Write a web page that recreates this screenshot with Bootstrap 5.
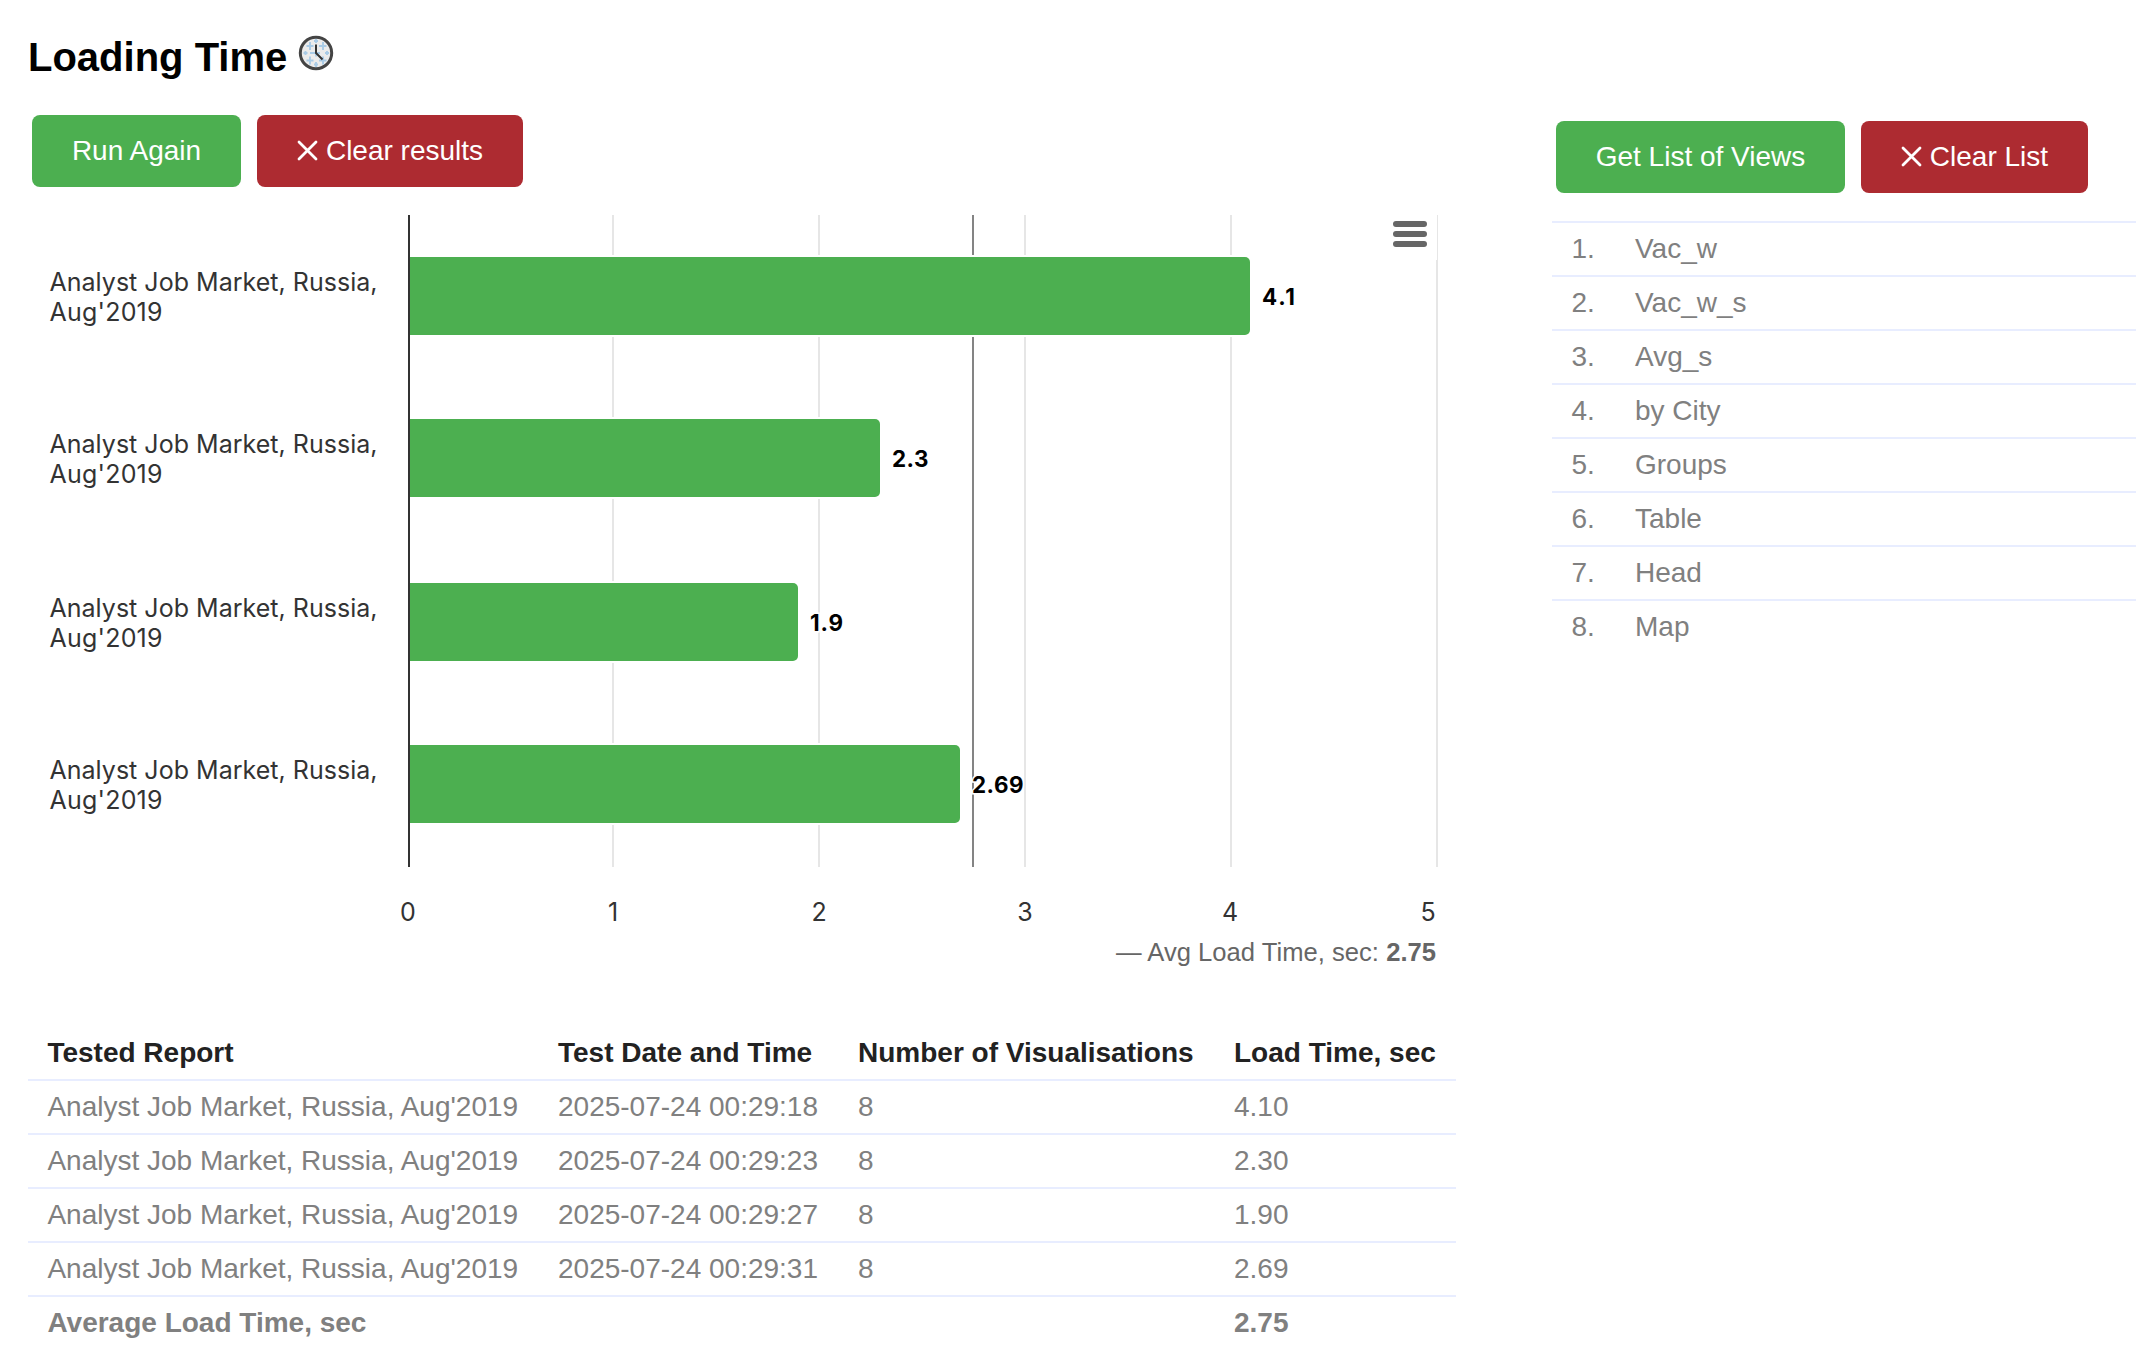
<!DOCTYPE html>
<html lang="en">
<head>
<meta charset="utf-8">
<title>Loading Time</title>
<link href="https://cdn.jsdelivr.net/npm/bootstrap@5.3.0/dist/css/bootstrap.min.css" rel="stylesheet">
<style>
  body { font-family: "Liberation Sans", Arial, sans-serif; font-size: 28px; line-height: 32px; color: #808080; background: #fff; overflow: hidden; }
  .page-title { font-size: 40px; line-height: 46px; font-weight: 700; color: #000; margin: 34px 0 35px; }
  .clock-icon { width: 36px; height: 36px; margin: 1px 0 0 11px; }
  .report-pane { width: 1456px; padding-left: 28px; }
  .views-pane { width: 584px; margin-left: 96px; padding-top: 121px; }
  .btn-tool { --bs-btn-color: #fff; --bs-btn-font-size: 28px; --bs-btn-line-height: 32px; --bs-btn-border-radius: 8px; --bs-btn-border-width: 0; --bs-btn-padding-x: 0; --bs-btn-padding-y: 0; height: 72px; font-family: inherit; }
  .btn-go { background: #4caf50; }
  .btn-clear { background: #ad2b31; }
  .cross-icon { width: 21px; height: 22px; margin: 0 8px 2px 0; }
  .w-run { width: 209px; } .w-results { width: 266px; } .w-get { width: 289px; } .w-list { width: 227px; }
  .line-table { --bs-table-color: #808080; --bs-table-bg: transparent; border-color: #e8edff; color: #808080; table-layout: fixed; margin: 0; }
  .line-table > :not(caption) > * > * { height: 54px; padding: 10px 0 10px 20px; border-width: 0; border-top: 2px solid #e8edff; white-space: nowrap; color: #808080; }
  .line-table > :not(caption) > * > :first-child { padding-left: 19.4px; }
  .line-table > thead > tr > th { border-top-color: transparent; color: #222; }
  .report-table { margin-top: 25px; }
  .views-table { margin-top: 28px; }
  .chart { display: block; width: 1428px; height: 800px; margin-top: 13px; font-family: Inter, sans-serif; }
  .axis-text { font-size: 25px; fill: #333; }
  .value-text { font-size: 22.4px; font-weight: 700; fill: #000; paint-order: stroke; stroke: #fff; stroke-width: 3px; }
  .avg-text { font-family: "Liberation Sans", Arial, sans-serif; font-size: 25.6px; fill: #666; }
</style>
<script src="https://cdn.jsdelivr.net/npm/bootstrap@5.3.0/dist/js/bootstrap.bundle.min.js"></script>
</head>
<body>
<div class="d-flex align-items-start">
  <main class="report-pane flex-shrink-0">
    <h1 class="page-title d-flex align-items-start">Loading Time
      <svg class="clock-icon" viewBox="0 0 36 36">
        <circle cx="18" cy="18" r="15.700" fill="#ebebeb" stroke="#444" stroke-width="3"/>
        <path d="M18 4v4M16 6h4M12 7v8M8.500 11h7M25 7v8M21 11h7.500M18 14.500v7M12 18h10M5.500 18h4M7.500 16v4M27 18h4M29 16v4M12 21.500v8M8.500 25.500h7M25 21.500v8M21 25.500h7.500M18 27v5M16 29.500h4" fill="none" stroke="#a9cbe6" stroke-width="1.9"/>
        <path d="M18 9.500V18l6.500 6.500" fill="none" stroke="#333" stroke-width="2"/>
      </svg>
    </h1>
    <div class="d-flex gap-3 ps-1">
      <button class="btn btn-tool btn-go w-run">Run Again</button>
      <button class="btn btn-tool btn-clear w-results d-flex align-items-center justify-content-center"><svg class="cross-icon" viewBox="0 0 21 22"><path d="M2 3l17 17M19 3L2 20" stroke="#fff" stroke-width="2.8" stroke-linecap="round"/></svg>Clear results</button>
    </div>
    <svg class="chart" viewBox="28 200 1428 800">
      <path d="M613 215V867M819 215V867M1025 215V867M1231 215V867M1437 215V867" stroke="#e6e6e6" stroke-width="2"/>
      <path d="M973 215V867" stroke="#777" stroke-width="1.800"/>
      <g fill="#4caf50" stroke="#fff" stroke-width="4" paint-order="stroke">
        <path d="M410 257h835a5 5 0 0 1 5 5v68a5 5 0 0 1-5 5H410z"/>
        <path d="M410 419h465a5 5 0 0 1 5 5v68a5 5 0 0 1-5 5H410z"/>
        <path d="M410 583h383a5 5 0 0 1 5 5v68a5 5 0 0 1-5 5H410z"/>
        <path d="M410 745h545a5 5 0 0 1 5 5v68a5 5 0 0 1-5 5H410z"/>
      </g>
      <path d="M409 215V867" stroke="#333" stroke-width="2"/>
      <g class="axis-text">
        <text x="49.500" y="291" textLength="328">Analyst Job Market, Russia,</text><text x="49.500" y="321" textLength="113">Aug'2019</text>
        <text x="49.500" y="453" textLength="328">Analyst Job Market, Russia,</text><text x="49.500" y="483" textLength="113">Aug'2019</text>
        <text x="49.500" y="617" textLength="328">Analyst Job Market, Russia,</text><text x="49.500" y="647" textLength="113">Aug'2019</text>
        <text x="49.500" y="779" textLength="328">Analyst Job Market, Russia,</text><text x="49.500" y="809" textLength="113">Aug'2019</text>
      </g>
      <g class="axis-text" text-anchor="middle">
        <text x="408" y="921">0</text><text x="613" y="921">1</text><text x="819" y="921">2</text><text x="1025" y="921">3</text><text x="1230" y="921">4</text><text x="1428" y="921">5</text>
      </g>
      <g class="value-text">
        <text x="1262" y="305" textLength="33">4.1</text><text x="892" y="467" textLength="36.500">2.3</text><text x="810" y="631" textLength="33">1.9</text><text x="972" y="793" textLength="51.500">2.69</text>
      </g>
      <rect x="1380" y="208" width="57" height="52" fill="#fff"/>
      <path d="M1396 224h28M1396 234h28M1396 244h28" stroke="#666" stroke-width="6" stroke-linecap="round"/>
      <text class="avg-text" x="1116" y="961" textLength="320">— Avg Load Time, sec: <tspan font-weight="700">2.75</tspan></text>
    </svg>
    <table class="table line-table report-table">
      <colgroup><col style="width:510px"><col style="width:300px"><col style="width:376px"><col></colgroup>
      <thead><tr><th>Tested Report</th><th>Test Date and Time</th><th>Number of Visualisations</th><th>Load Time, sec</th></tr></thead>
      <tbody>
        <tr><td>Analyst Job Market, Russia, Aug'2019</td><td>2025-07-24 00:29:18</td><td>8</td><td>4.10</td></tr>
        <tr><td>Analyst Job Market, Russia, Aug'2019</td><td>2025-07-24 00:29:23</td><td>8</td><td>2.30</td></tr>
        <tr><td>Analyst Job Market, Russia, Aug'2019</td><td>2025-07-24 00:29:27</td><td>8</td><td>1.90</td></tr>
        <tr><td>Analyst Job Market, Russia, Aug'2019</td><td>2025-07-24 00:29:31</td><td>8</td><td>2.69</td></tr>
        <tr class="fw-bold"><td>Average Load Time, sec</td><td></td><td></td><td>2.75</td></tr>
      </tbody>
    </table>
  </main>
  <aside class="views-pane flex-shrink-0">
    <div class="d-flex gap-3 ps-1">
      <button class="btn btn-tool btn-go w-get">Get List of Views</button>
      <button class="btn btn-tool btn-clear w-list d-flex align-items-center justify-content-center"><svg class="cross-icon" viewBox="0 0 21 22"><path d="M2 3l17 17M19 3L2 20" stroke="#fff" stroke-width="2.8" stroke-linecap="round"/></svg>Clear List</button>
    </div>
    <table class="table line-table views-table">
      <colgroup><col style="width:63px"><col></colgroup>
      <tbody>
        <tr><td>1.</td><td>Vac_w</td></tr><tr><td>2.</td><td>Vac_w_s</td></tr><tr><td>3.</td><td>Avg_s</td></tr><tr><td>4.</td><td>by City</td></tr>
        <tr><td>5.</td><td>Groups</td></tr><tr><td>6.</td><td>Table</td></tr><tr><td>7.</td><td>Head</td></tr><tr><td>8.</td><td>Map</td></tr>
      </tbody>
    </table>
  </aside>
</div>
</body>
</html>
